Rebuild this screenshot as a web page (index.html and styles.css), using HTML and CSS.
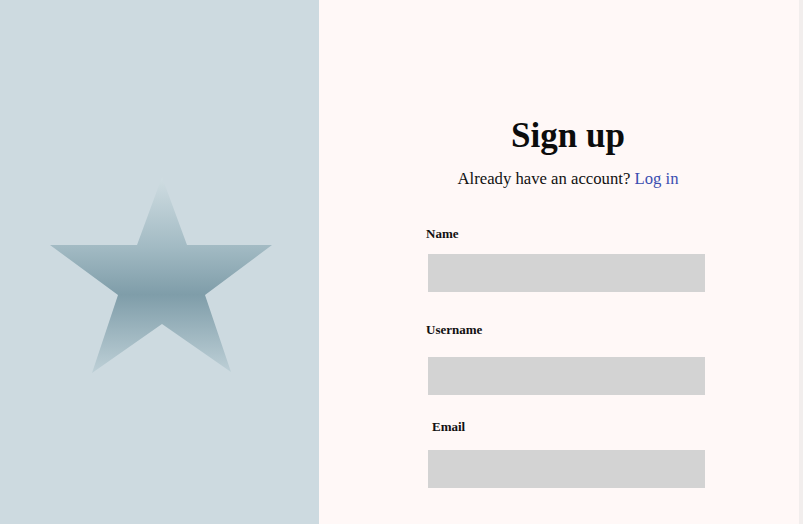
FILE: index.html
```html
<!DOCTYPE html>
<html lang="en">
<head>
<meta charset="utf-8">
<title>Sign up</title>
<link rel="stylesheet" href="styles.css">
</head>
<body>
<div class="page">
  <aside class="art">
    <svg class="star" width="319" height="524" viewBox="0 0 319 524" aria-hidden="true">
      <defs>
        <linearGradient id="starGrad" x1="0" y1="0" x2="0" y2="1">
          <stop offset="0" stop-color="#d0dde2"/>
          <stop offset="0.35" stop-color="#a3bbc4"/>
          <stop offset="0.6" stop-color="#7f9da9"/>
          <stop offset="1" stop-color="#bed0d7"/>
        </linearGradient>
      </defs>
      <polygon fill="url(#starGrad)" points="162,177 187,245 272,245 205,295 231,372 162,324 92,373 118,295 50,245 137,245"/>
    </svg>
  </aside>
  <main class="panel">
    <div class="form-wrap">
      <h1 class="title">Sign up</h1>
      <p class="subtitle">Already have an account? <a href="#" class="link">Log in</a></p>
      <form class="form">
        <div class="field">
          <label class="label">Name</label>
          <div class="input"></div>
        </div>
        <div class="field field-user">
          <label class="label">Username</label>
          <div class="input"></div>
        </div>
        <div class="field field-email">
          <label class="label label-email">Email</label>
          <div class="input"></div>
        </div>
      </form>
    </div>
  </main>
  <div class="edge"></div>
</div>
</body>
</html>
```
FILE: styles.css
```css
html, body {
  margin: 0;
  padding: 0;
}
body {
  font-family: "Liberation Serif", "Times New Roman", serif;
  color: #111;
  background: #fff8f7;
}
.page {
  display: flex;
  width: 803px;
  height: 524px;
  overflow: hidden;
}
.art {
  width: 319px;
  flex: 0 0 319px;
  background: #cddae0;
}
.star {
  display: block;
}
.panel {
  flex: 1;
  background: #fff8f7;
}
.edge {
  flex: 0 0 4px;
  background: #f2eeed;
}
.form-wrap {
  width: 300px;
  margin-left: 99px;
  padding-top: 114px;
}
.title {
  margin: 0;
  font-size: 35px;
  font-weight: bold;
  text-align: center;
  line-height: 44px;
  color: #0c0c0c;
}
.subtitle {
  margin: 10px 0 0;
  font-size: 16.7px;
  text-align: center;
  line-height: 22px;
}
.link {
  color: #3a4db0;
  text-decoration: none;
}
.form {
  margin-top: 36px;
  padding-left: 10px;
}
.field {
  display: flex;
  flex-direction: column;
}
.label {
  font-size: 13px;
  font-weight: bold;
  line-height: 16px;
  margin-left: -2px;
}
.label-email {
  margin-left: 4px;
}
.input {
  width: 277px;
  height: 38px;
  background: #d3d3d3;
  margin-top: 12px;
}
.field-user {
  margin-top: 30px;
}
.field-user .input {
  margin-top: 19px;
}
.field-email {
  margin-top: 24px;
}
.field-email .input {
  margin-top: 15px;
}
```
